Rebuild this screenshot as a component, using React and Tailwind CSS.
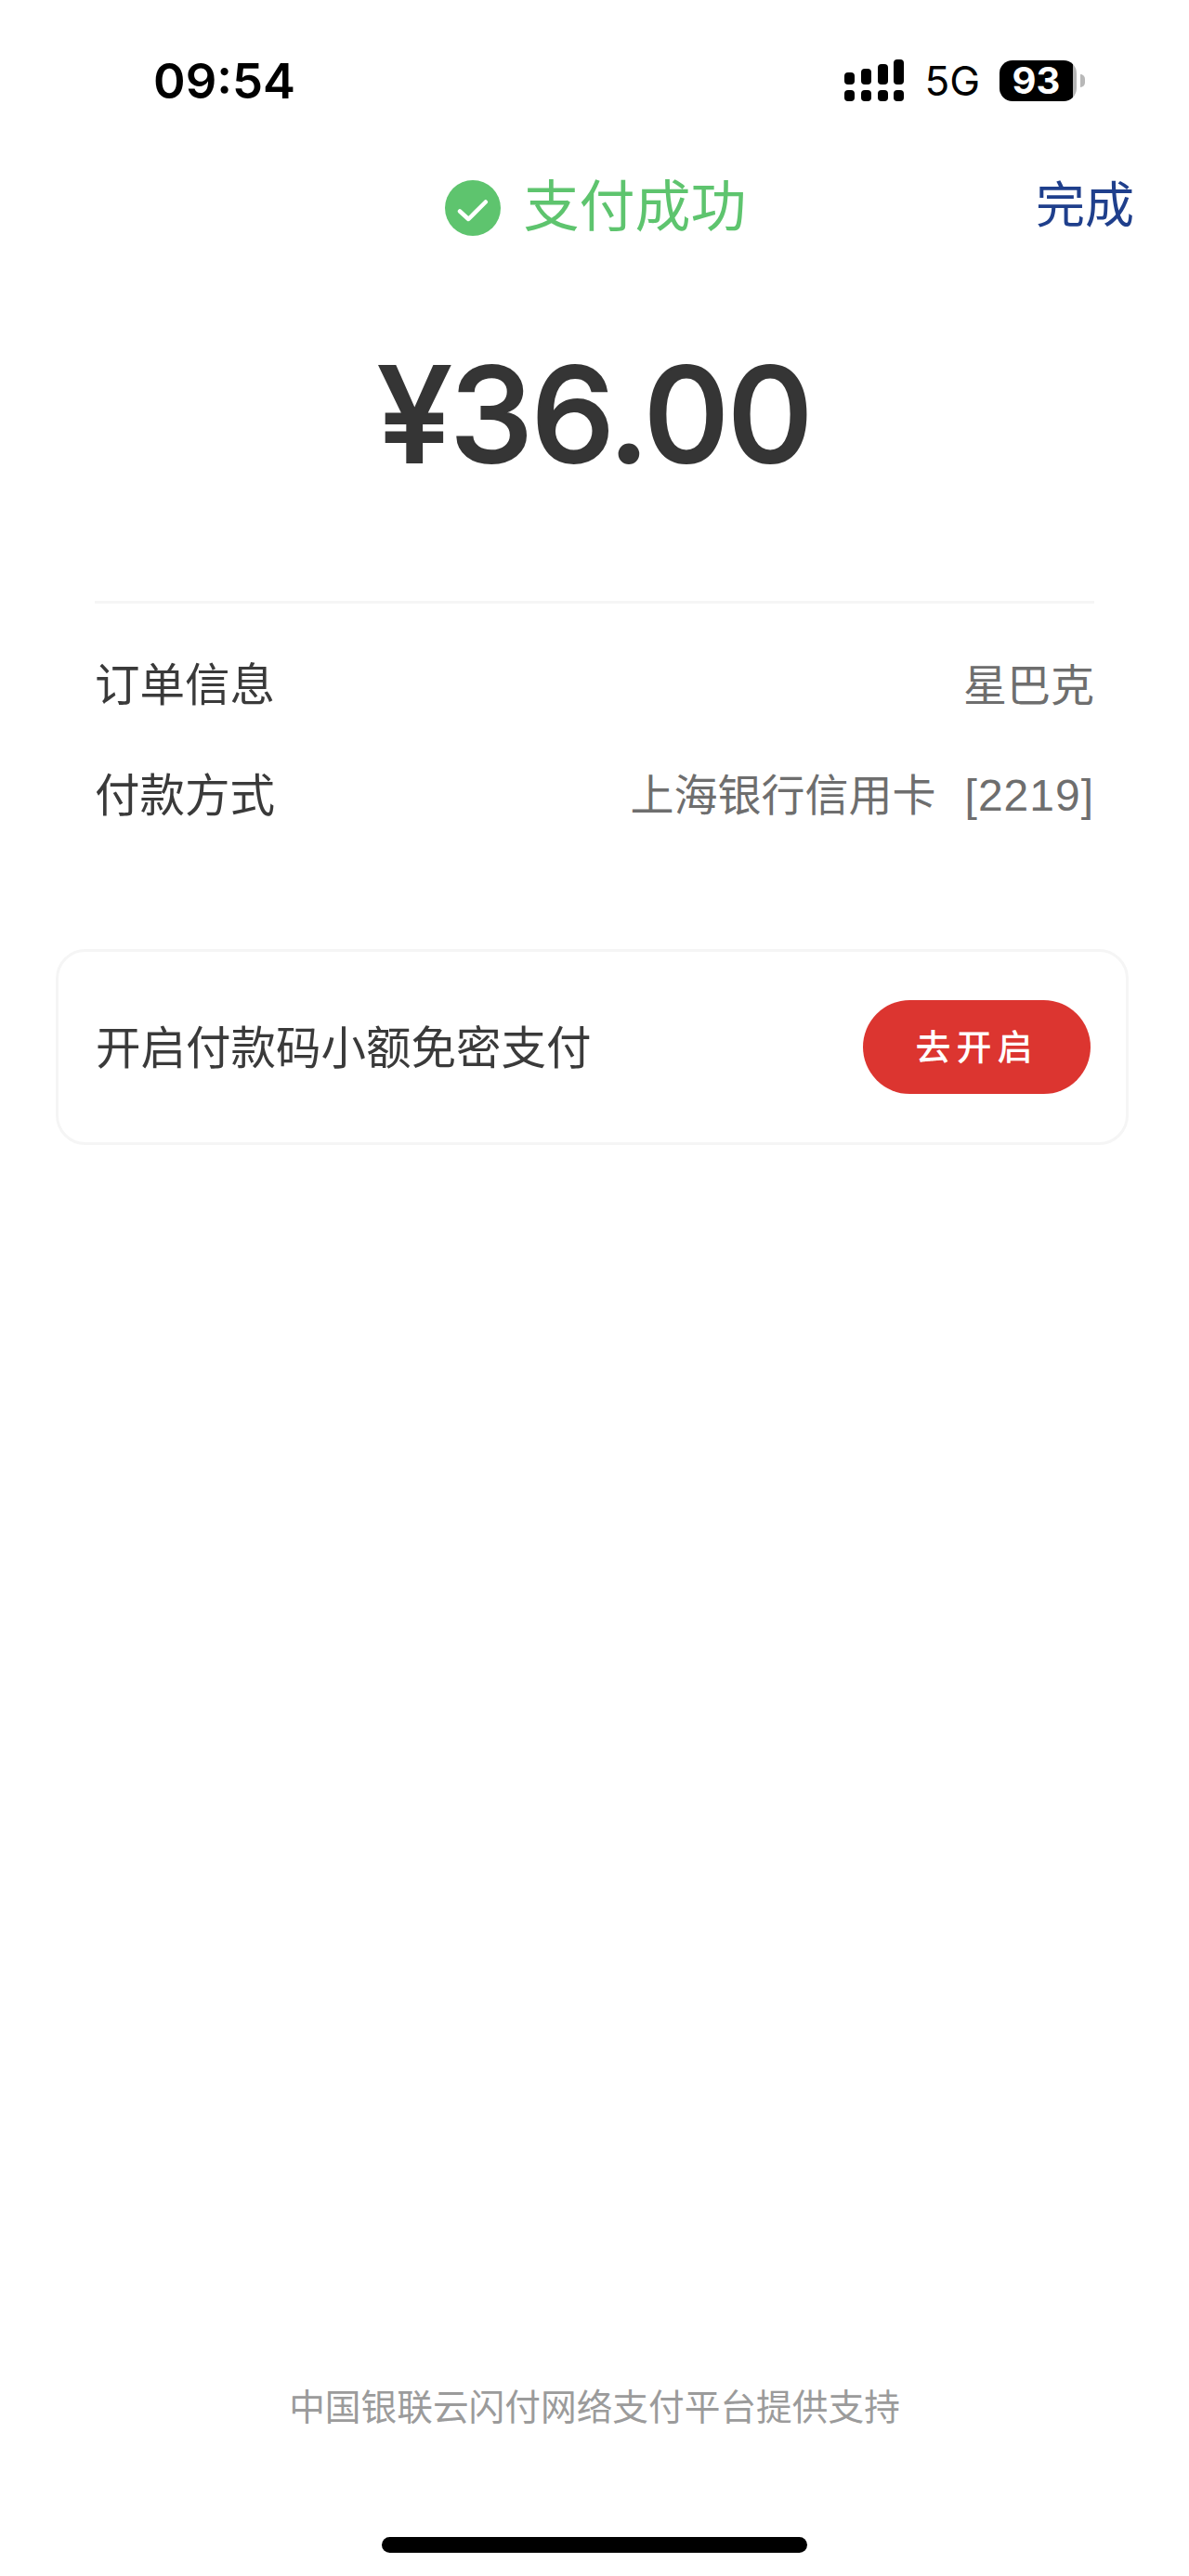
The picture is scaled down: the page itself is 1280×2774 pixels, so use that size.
import React from "react";

const cjk = "font-['Liberation_Sans','Noto_Sans_CJK_SC',sans-serif]";

const SignalIcon = () => (
  <svg width="66" height="46" viewBox="0 0 66 46" fill="#000">
    <rect x="1" y="14" width="11" height="13" rx="4" />
    <rect x="19" y="10" width="11" height="17" rx="4" />
    <rect x="37" y="5" width="11" height="22" rx="4" />
    <rect x="54" y="0" width="11" height="27" rx="4" />
    <rect x="1" y="33" width="11" height="12" rx="4" />
    <rect x="19" y="33" width="11" height="12" rx="4" />
    <rect x="37" y="33" width="11" height="12" rx="4" />
    <rect x="54" y="33" width="11" height="12" rx="4" />
  </svg>
);

const CheckIcon = () => (
  <svg width="60" height="60" viewBox="0 0 60 60">
    <circle cx="30" cy="30" r="30" fill="#5ec46e" />
    <path d="M16 33.5L25.3 42L43.8 23.5" fill="none" stroke="#fff" strokeWidth="4.5" strokeLinecap="round" strokeLinejoin="round" />
  </svg>
);

const InfoRow = ({ label, children }) => (
  <div className="flex items-center justify-between h-[68px] leading-none">
    <span className="text-[48.5px] text-[#3a3a3a]">{label}</span>
    <span className="text-[47px] text-[#6e6e6e]">{children}</span>
  </div>
);

export default function App() {
  return (
    <div className={`${cjk} flex flex-col h-[2774px] bg-white overflow-hidden`}>
      {/* status bar */}
      <div className="flex items-center justify-between h-[44px] mt-[65px] pl-[165px] pr-[112px]">
        <span className="font-['Inter',sans-serif] font-semibold text-[52.5px] leading-none text-black">09:54</span>
        <div className="flex items-center">
          <SignalIcon />
          <span className="ml-[21px] font-['Inter',sans-serif] text-[44px] leading-none text-black">5G</span>
          <div className="ml-[21px] flex items-center justify-center pr-[4px] w-[83px] h-[44px] rounded-[14px] bg-[linear-gradient(90deg,#000_95%,#b5b5b5_95%)] font-['Inter',sans-serif] font-bold text-[40px] leading-none text-white">
            93
          </div>
          <div className="ml-[4px] w-[5px] h-[14px] rounded-r-full bg-[#b8b8b8]"></div>
        </div>
      </div>

      {/* header */}
      <div className="relative flex items-center justify-center h-[64px] mt-[83px]">
        <div className="flex items-center gap-[25px] ml-[2px]">
          <CheckIcon />
          <span className="text-[60px] leading-none text-[#5ec46e]">支付成功</span>
        </div>
        <span className="absolute right-[59px] top-[3px] text-[53px] leading-none text-[#1f3f8c]">完成</span>
      </div>

      {/* amount */}
      <div className="flex justify-center mt-[118px] font-['Inter',sans-serif] font-medium text-[143px] leading-none tracking-[-2px] [-webkit-text-stroke:2px_#353535] text-[#353535]">
        ¥36.00
      </div>

      {/* order info */}
      <div className="mx-[102px] mt-[130px] border-t-[3px] border-[#f5f5f5] pt-[54px] flex flex-col gap-[51px]">
        <InfoRow label="订单信息">星巴克</InfoRow>
        <InfoRow label="付款方式">
          上海银行信用卡<span className="ml-[31px] text-[48px] tracking-[1px]">[2219]</span>
        </InfoRow>
      </div>

      {/* promo card */}
      <div className="ml-[60px] mr-[65px] mt-[131px] h-[211px] flex items-center justify-between pl-[40px] pr-[38px] border-[3px] border-[#f5f5f5] rounded-[32px]">
        <span className="text-[48.5px] leading-none text-[#3a3a3a] translate-y-[2px]">开启付款码小额免密支付</span>
        <button className="flex items-center justify-center w-[245px] h-[101px] rounded-full bg-[#dc3530] text-white text-[38px] font-medium leading-none tracking-[6px]">
          去开启
        </button>
      </div>

      {/* footer */}
      <div className="mt-auto flex justify-center text-[38.7px] leading-none text-[#9b9b9b]">
        中国银联云闪付网络支付平台提供支持
      </div>
      <div className="mt-[119px] mb-[25px] mx-auto w-[458px] h-[17px] rounded-full bg-black"></div>
    </div>
  );
}
